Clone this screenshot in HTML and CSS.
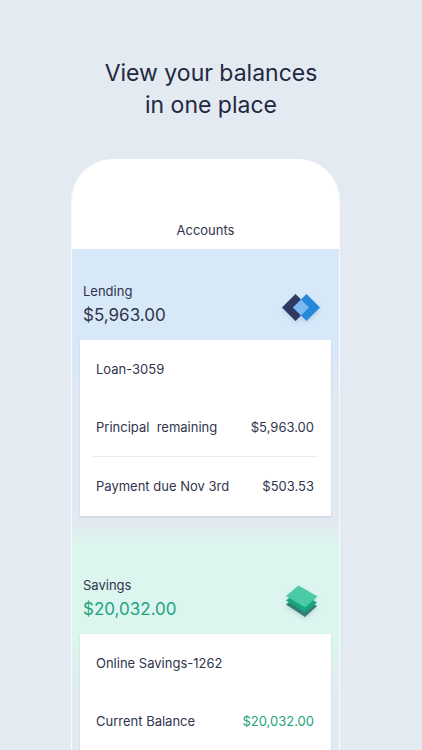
FILE: index.html
```html
<!DOCTYPE html>
<html lang="en">
<head>
<meta charset="utf-8">
<meta name="viewport" content="width=device-width, initial-scale=1">
<title>Accounts</title>
<link rel="stylesheet" href="styles.css">
</head>
<body>
<h1 class="headline">View your balances<br>in one place</h1>
<main class="phone">
  <h2 class="title">Accounts</h2>
  <section class="account lending">
    <header class="summary">
      <div>
        <h3 class="name">Lending</h3>
        <p class="total">$5,963.00</p>
      </div>
      <svg class="icon" viewBox="0 0 40 40" aria-hidden="true">
        <path fill="#2f3861" d="M14.500 7 28 20.500 14.500 34 1 20.500Z"/>
        <path fill="#2589da" d="M25.500 7 39 20.500 25.500 34 12 20.500Z"/>
        <path fill="#7bb9ef" d="M20 12.500 28 20.500 20 28.500 12 20.500Z"/>
      </svg>
    </header>
    <div class="card">
      <p class="row">Loan-3059</p>
      <dl class="row"><dt>Principal&nbsp; remaining</dt><dd>$5,963.00</dd></dl>
      <hr class="rule">
      <dl class="row"><dt>Payment due Nov 3rd</dt><dd>$503.53</dd></dl>
    </div>
  </section>
  <section class="account savings">
    <header class="summary">
      <div>
        <h3 class="name">Savings</h3>
        <p class="total">$20,032.00</p>
      </div>
      <svg class="icon" viewBox="0 0 40 40" aria-hidden="true">
        <path fill="#347e78" d="M17 14 36 25 24 36 5 23.500Z"/>
        <path fill="#16a67e" d="M17 10 36 21.500 24 31.500 5 19.500Z"/>
        <path fill="#4bcaa7" d="M17.500 4.500 36.500 15.500 24 26.500 5 15Z"/>
      </svg>
    </header>
    <div class="card">
      <p class="row">Online Savings-1262</p>
      <dl class="row"><dt>Current Balance</dt><dd>$20,032.00</dd></dl>
      <hr class="rule">
    </div>
  </section>
</main>
</body>
</html>
```
FILE: styles.css
```css
* {
  box-sizing: border-box;
}

body {
  display: flex;
  flex-direction: column;
  height: 100vh;
  margin: 0;
  overflow: hidden;
  background: #e3eaf1;
  color: #30354c;
  font-family: Inter, "Liberation Sans", sans-serif;
  font-size: 13px;
  line-height: 20px;
}

h1, h2, h3, p, dl, dd {
  margin: 0;
  font-weight: 400;
}

.headline {
  padding: 57px 0 38px;
  color: #232842;
  font-size: 23px;
  line-height: 32px;
  text-align: center;
}

.phone {
  flex: 1;
  min-height: 0;
  margin: 0 82px 0 71px;
  overflow: hidden;
  border: solid #f8fbfd;
  border-width: 0 1px;
  border-radius: 42px 42px 0 0;
}

.title {
  padding: 61px 0 9px;
  background: #fff;
  font-size: 13px;
  text-align: center;
}

.account {
  height: 294px;
  padding: 0 8px;
}

.lending {
  background: linear-gradient(#d7e8f9 100px, #e3e9f2 160px, #e3e9f2 272px, #dcf5ee 294px);
}

.savings {
  background: linear-gradient(#dcf5ee 100px, #e2eaf2 160px);
}

.summary {
  display: flex;
  justify-content: space-between;
  align-items: flex-start;
  height: 91px;
  padding: 32px 10px 0 3px;
}

.name {
  font-size: 13px;
}

.total {
  font-size: 17px;
  line-height: 28px;
}

.icon {
  width: 40px;
  height: 40px;
  margin-top: 6px;
  filter: drop-shadow(0 2px 2px #47699233);
}

.card {
  padding-bottom: 1px;
  background: #fff;
  box-shadow: 0 1px 2px #5a647833;
}

.row {
  display: flex;
  justify-content: space-between;
  align-items: center;
  height: 58px;
  padding: 0 17px 0 16px;
}

.rule {
  height: 1px;
  margin: 0 13px;
  border: 0;
  background: #e7edf0;
}

.savings .total,
.savings dd {
  color: #22a37e;
}
```
